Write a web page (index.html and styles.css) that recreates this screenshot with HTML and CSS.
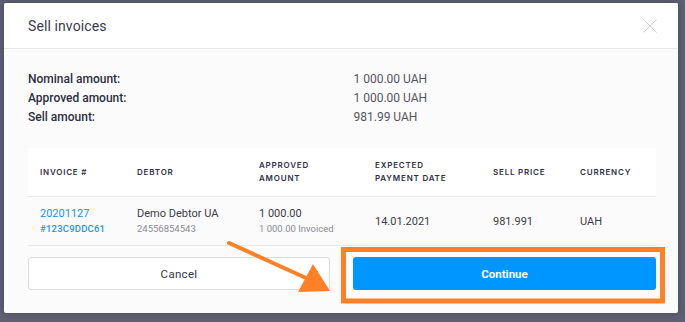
FILE: index.html
```html
<!doctype html>
<html lang="en">
  <head>
    <meta charset="UTF-8" />
    <meta name="viewport" content="width=device-width, initial-scale=1.0" />
    <title>Sell invoices</title>
    <link rel="stylesheet" href="styles.css">
  </head>
  <body>
    <div class="modal">
      <div class="modal-header">
        <h2 class="modal-title">Sell invoices</h2>
        <button class="close-btn" aria-label="Close">
          <svg width="14" height="14" viewBox="0 0 14 14">
            <path d="M0.5 0.5 L13.5 13.5 M13.5 0.5 L0.5 13.5" stroke="#cfcfd4" stroke-width="1" fill="none" />
          </svg>
        </button>
      </div>
      <div class="modal-body">
        <div class="summary">
          <div class="summary-label">Nominal amount:</div>
          <div class="summary-value">1 000.00 UAH</div>
          <div class="summary-label">Approved amount:</div>
          <div class="summary-value">1 000.00 UAH</div>
          <div class="summary-label">Sell amount:</div>
          <div class="summary-value">981.99 UAH</div>
        </div>

        <table class="invoice-table">
          <colgroup>
            <col style="width: 97px">
            <col style="width: 122px">
            <col style="width: 116px">
            <col style="width: 118px">
            <col style="width: 87px">
            <col style="width: 88px">
          </colgroup>
          <thead>
            <tr>
              <th>Invoice #</th>
              <th>Debtor</th>
              <th>Approved<br>amount</th>
              <th>Expected<br>payment date</th>
              <th>Sell price</th>
              <th>Currency</th>
            </tr>
          </thead>
          <tbody>
            <tr>
              <td>
                <div class="link">20201127</div>
                <div class="link small">#123C9DDC61</div>
              </td>
              <td>
                <div>Demo Debtor UA</div>
                <div class="muted">24556854543</div>
              </td>
              <td>
                <div>1 000.00</div>
                <div class="muted">1 000.00 Invoiced</div>
              </td>
              <td>14.01.2021</td>
              <td>981.991</td>
              <td>UAH</td>
            </tr>
          </tbody>
        </table>

        <div class="actions">
          <button class="btn btn-cancel">Cancel</button>
          <button class="btn btn-continue">Continue</button>
        </div>
      </div>
    </div>

    <!-- annotation drawn over the screenshot -->
    <svg class="annotation" width="685" height="322" viewBox="0 0 685 322">
      <rect x="343.5" y="249.5" width="319" height="51.5" fill="none" stroke="#ff8026" stroke-width="5" />
      <line x1="229" y1="243" x2="306" y2="278" stroke="#ff8026" stroke-width="4" stroke-linecap="round" />
      <polygon points="313,264 298,292 330,291" fill="#ff8026" />
    </svg>
  </body>
</html>
```

FILE: styles.css
```css
body {
  margin: 0;
  width: 685px;
  height: 322px;
  overflow: hidden;
  background-color: #5f5f74;
  font-family: Roboto, "Liberation Sans", sans-serif;
  position: relative;
}
.modal {
  margin: 3px 0 0 4px;
  width: 674px;
  height: 310px;
  background-color: #fbfbfc;
  border-radius: 2px;
  box-shadow: 0 0 6px rgba(0, 0, 0, 0.25);
  overflow: hidden;
}
.modal-header {
  height: 45px;
  background-color: #ffffff;
  border-bottom: 1px solid #e6e6ea;
  display: flex;
  align-items: center;
  justify-content: space-between;
  padding: 0 21px 0 24px;
}
.modal-title {
  margin: 0;
  font-size: 14px;
  font-weight: 400;
  color: #3a3b4c;
  letter-spacing: 0.1px;
}
.close-btn {
  border: none;
  background: none;
  padding: 0;
  width: 14px;
  height: 14px;
  display: flex;
  margin-top: 1px;
}
.modal-body {
  padding: 21px 22px 23px 24px;
}
.summary {
  display: grid;
  grid-template-columns: 1fr 1fr;
  column-gap: 23px;
  font-size: 12px;
  line-height: 19px;
}
.summary-label {
  font-weight: 500;
  color: #2c2e3e;
}
.summary-value {
  color: #55565f;
}
.invoice-table {
  margin-top: 21px;
  width: 628px;
  border-collapse: collapse;
  table-layout: fixed;
}
.invoice-table th {
  height: 48px;
  padding: 0 0 0 12px;
  background-color: #ffffff;
  border-bottom: 1px solid #e7e7eb;
  text-align: left;
  font-family: Inter, "Noto Sans", sans-serif;
  font-size: 8px;
  font-weight: 600;
  line-height: 13px;
  letter-spacing: 0.8px;
  text-transform: uppercase;
  color: #2f3048;
}
.invoice-table td {
  height: 48px;
  padding: 0 0 0 12px;
  border-bottom: 1px solid #e7e7eb;
  font-size: 11px;
  line-height: 15px;
  color: #3b3c46;
  vertical-align: middle;
}
.link {
  color: #1f93e8;
}
.link.small {
  font-size: 9.5px;
  font-weight: 500;
  letter-spacing: 0.2px;
}
.muted {
  font-size: 9.5px;
  color: #8a8b94;
}
.actions {
  margin-top: 11px;
  display: grid;
  grid-template-columns: 302px 303px;
  column-gap: 23px;
}
.btn {
  height: 33px;
  border-radius: 3px;
  font-family: Roboto, "Liberation Sans", sans-serif;
  font-size: 11.5px;
  cursor: pointer;
}
.btn-cancel {
  background-color: #ffffff;
  border: 1px solid #dcdce0;
  color: #34353f;
  letter-spacing: 0.3px;
}
.btn-continue {
  background-color: #0096ff;
  border: none;
  color: #ffffff;
  font-weight: 700;
}
.annotation {
  position: absolute;
  top: 0;
  left: 0;
  pointer-events: none;
}
```
